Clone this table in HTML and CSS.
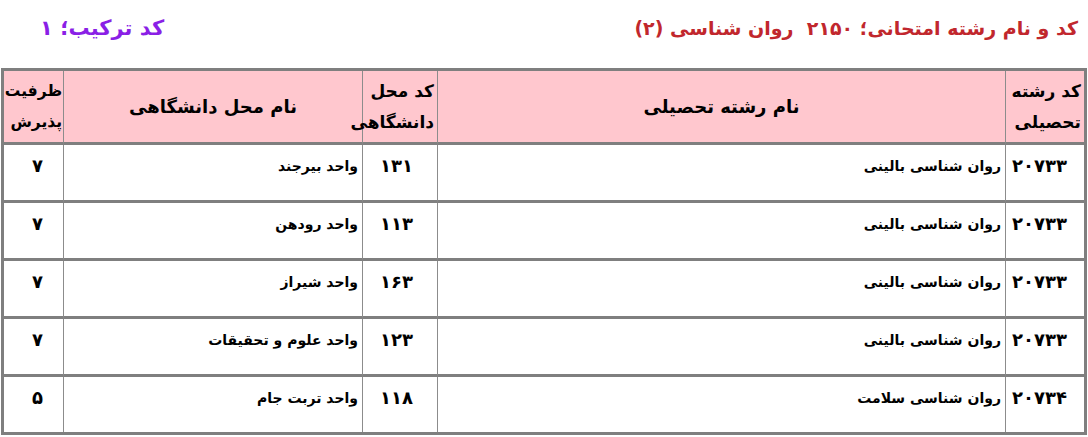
FILE: index.html
```html
<!DOCTYPE html>
<html lang="fa" dir="rtl">
<head>
<meta charset="utf-8">
<link rel="stylesheet" href="styles.css">
</head>
<body>
<div class="top">
  <div class="title">کد و نام رشته امتحانی؛ ۲۱۵۰&nbsp;&nbsp;روان شناسی (۲)</div>
  <div class="combo">کد ترکیب؛ ۱</div>
</div>
<table class="grid">
  <colgroup>
    <col class="c-code">
    <col class="c-field">
    <col class="c-ucode">
    <col class="c-uname">
    <col class="c-cap">
  </colgroup>
  <thead>
    <tr>
      <th class="wrap">کد رشته<br>تحصیلی</th>
      <th class="mid">نام رشته تحصیلی</th>
      <th class="wrap">کد محل<br>دانشگاهی</th>
      <th class="mid">نام محل دانشگاهی</th>
      <th class="wrap narrow">ظرفیت<br>پذیرش</th>
    </tr>
  </thead>
  <tbody>
    <tr>
      <td class="num code">۲۰۷۳۳</td>
      <td class="txt">روان شناسی بالینی</td>
      <td class="num ucode">۱۳۱</td>
      <td class="txt">واحد بیرجند</td>
      <td class="num cap">۷</td>
    </tr>
    <tr>
      <td class="num code">۲۰۷۳۳</td>
      <td class="txt">روان شناسی بالینی</td>
      <td class="num ucode">۱۱۳</td>
      <td class="txt">واحد رودهن</td>
      <td class="num cap">۷</td>
    </tr>
    <tr>
      <td class="num code">۲۰۷۳۳</td>
      <td class="txt">روان شناسی بالینی</td>
      <td class="num ucode">۱۶۳</td>
      <td class="txt">واحد شیراز</td>
      <td class="num cap">۷</td>
    </tr>
    <tr>
      <td class="num code">۲۰۷۳۳</td>
      <td class="txt">روان شناسی بالینی</td>
      <td class="num ucode">۱۲۳</td>
      <td class="txt">واحد علوم و تحقیقات</td>
      <td class="num cap">۷</td>
    </tr>
    <tr>
      <td class="num code">۲۰۷۳۴</td>
      <td class="txt">روان شناسی سلامت</td>
      <td class="num ucode">۱۱۸</td>
      <td class="txt">واحد تربت جام</td>
      <td class="num cap">۵</td>
    </tr>
  </tbody>
</table>
</body>
</html>
```

FILE: styles.css
```css
html, body {
  margin: 0;
  padding: 0;
  background: #ffffff;
}
body {
  font-family: "DejaVu Sans", "Noto Sans", sans-serif;
  font-weight: bold;
  color: #000;
  width: 1088px;
}
.top {
  height: 68px;
  display: flex;
  justify-content: space-between;
  align-items: flex-start;
  padding: 0 10px 0 40px;
  box-sizing: border-box;
}
.title {
  color: #c1272d;
  font-size: 19px;
  line-height: 28px;
  padding-top: 14px;
}
.combo {
  color: #8a1fe6;
  font-size: 21px;
  line-height: 28px;
  padding-top: 14px;
}
.grid {
  margin: 0 1px;
  width: 1086px;
  table-layout: fixed;
  border-collapse: separate;
  border-spacing: 0;
  border: 3px solid #7f7f7f;
}
.c-code { width: 79px; }
.c-field { width: 568px; }
.c-ucode { width: 75px; }
.c-uname { width: 299px; }
.c-cap { width: 59px; }

.grid th, .grid td {
  box-sizing: border-box;
  border-left: 1px solid #8c8c8c;
  border-bottom: 3px solid #7f7f7f;
  padding: 0;
}
.grid th:last-child, .grid td:last-child {
  border-left: none;
}
.grid tbody tr:last-child td {
  border-bottom: none;
}
.grid th {
  background: #ffc7ce;
  height: 74px;
  font-size: 17px;
  line-height: 31px;
  vertical-align: middle;
}
.grid th.wrap {
  text-align: right;
  padding-right: 3px;
}
.grid th.narrow {
  font-size: 15.5px;
  padding-right: 1px;
}
.grid th.mid {
  text-align: center;
  font-size: 18px;
}
.grid td {
  height: 58px;
  vertical-align: top;
  text-align: right;
  padding-top: 10px;
}
.grid tbody tr:last-child td {
  height: 55px;
}
.grid td.txt {
  font-size: 14px;
  line-height: 22px;
  padding-right: 4px;
}
.grid td.num {
  font-size: 18px;
  line-height: 22px;
}
.grid td.code { padding-right: 17px; }
.grid td.ucode { padding-right: 24px; }
.grid td.cap { padding-right: 20px; }
```
